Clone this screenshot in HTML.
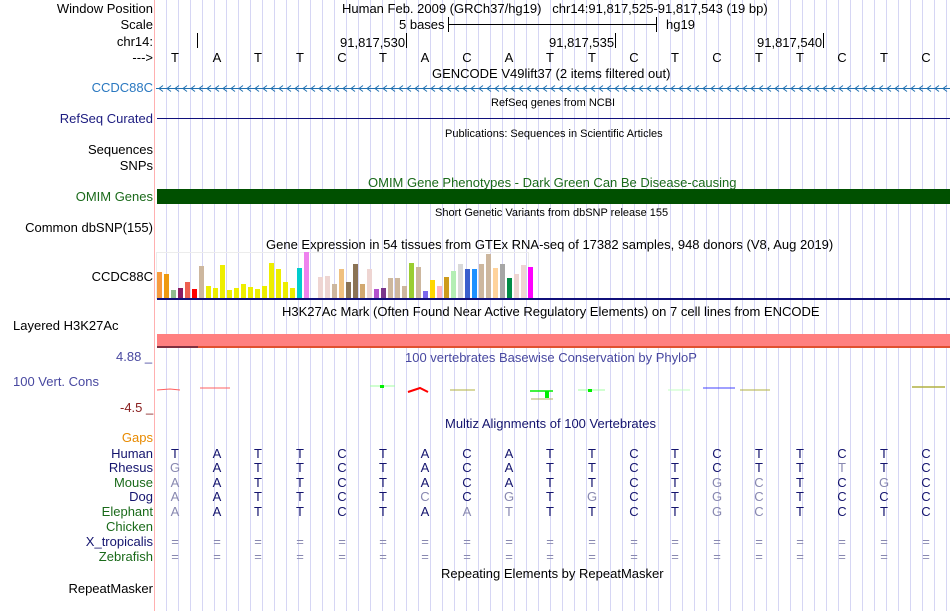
<!DOCTYPE html>
<html><head><meta charset="utf-8">
<style>
html,body{margin:0;padding:0;}
body{width:950px;height:611px;position:relative;overflow:hidden;background:#fff;font-family:"Liberation Sans",Arial,sans-serif;color:#000;}
#grid{position:absolute;left:155px;top:0;width:795px;height:611px;background-image:linear-gradient(to right,rgba(0,0,0,0) 0px,rgba(0,0,0,0) 11px,#d6d6f4 11px,#d6d6f4 12px);background-size:12px 611px;background-repeat:repeat-x;}
#pink{position:absolute;left:154px;top:0;width:1px;height:611px;background:#ffb0b0;}
.t{position:absolute;font-size:13px;line-height:15px;white-space:nowrap;}
.s{position:absolute;font-size:11px;line-height:13px;white-space:nowrap;}
.l{position:absolute;right:797px;font-size:13px;line-height:15px;white-space:nowrap;text-align:right;}
.b{position:absolute;font-size:13px;line-height:15px;width:20px;margin-left:-10px;text-align:center;}
.n{color:#14146e}.g{color:#8888b0}
.r{position:absolute;}
</style></head><body>
<div id="grid"></div>
<div id="pink"></div>

<div class="l" style="top:1px">Window Position</div>
<div class="l" style="top:17px">Scale</div>
<div class="l" style="top:34px">chr14:</div>
<div class="l" style="top:50px">---&gt;</div>
<div class="l" style="top:80px;color:#2a78c0">CCDC88C</div>
<div class="l" style="top:111px;color:#1c1c80">RefSeq Curated</div>
<div class="l" style="top:142px">Sequences</div>
<div class="l" style="top:158px">SNPs</div>
<div class="l" style="top:189px;color:#1a6a1a">OMIM Genes</div>
<div class="l" style="top:220px">Common dbSNP(155)</div>
<div class="l" style="top:269px">CCDC88C</div>
<div class="t" style="left:13px;top:318px">Layered H3K27Ac</div>
<div class="t" style="left:116px;top:349px;color:#4848a0">4.88 _</div>
<div class="t" style="left:13px;top:374px;color:#4848a0">100 Vert. Cons</div>
<div class="t" style="left:120px;top:400px;color:#8a2020">-4.5 _</div>
<div class="l" style="top:430px;color:#e88a00">Gaps</div>
<div class="l n" style="top:446px">Human</div>
<div class="l n" style="top:460px">Rhesus</div>
<div class="l" style="top:475px;color:#1a6a1a">Mouse</div>
<div class="l n" style="top:489px">Dog</div>
<div class="l" style="top:504px;color:#1a6a1a">Elephant</div>
<div class="l" style="top:519px;color:#1a6a1a">Chicken</div>
<div class="l n" style="top:534px">X_tropicalis</div>
<div class="l" style="top:549px;color:#1a6a1a">Zebrafish</div>
<div class="l" style="top:581px">RepeatMasker</div>

<div class="t" style="left:342px;top:1px">Human Feb. 2009 (GRCh37/hg19)&nbsp;&nbsp;&nbsp;chr14:91,817,525-91,817,543 (19 bp)</div>
<div class="t" style="left:399px;top:17px">5 bases</div>
<div class="r" style="left:448px;top:17px;width:1px;height:15px;background:#000"></div>
<div class="r" style="left:448px;top:24px;width:209px;height:1px;background:#000"></div>
<div class="r" style="left:656px;top:17px;width:1px;height:15px;background:#000"></div>
<div class="t" style="left:666px;top:17px">hg19</div>
<div class="r" style="left:197px;top:33px;width:1px;height:15px;background:#000"></div>
<div class="t" style="left:340px;top:35px">91,817,530</div>
<div class="r" style="left:406px;top:33px;width:1px;height:15px;background:#000"></div>
<div class="t" style="left:549px;top:35px">91,817,535</div>
<div class="r" style="left:615px;top:33px;width:1px;height:15px;background:#000"></div>
<div class="t" style="left:757px;top:35px">91,817,540</div>
<div class="r" style="left:823px;top:33px;width:1px;height:15px;background:#000"></div>

<div class="b" style="left:175px;top:50px">T</div><div class="b" style="left:217px;top:50px">A</div><div class="b" style="left:258px;top:50px">T</div><div class="b" style="left:300px;top:50px">T</div><div class="b" style="left:342px;top:50px">C</div><div class="b" style="left:383px;top:50px">T</div><div class="b" style="left:425px;top:50px">A</div><div class="b" style="left:467px;top:50px">C</div><div class="b" style="left:509px;top:50px">A</div><div class="b" style="left:550px;top:50px">T</div><div class="b" style="left:592px;top:50px">T</div><div class="b" style="left:634px;top:50px">C</div><div class="b" style="left:675px;top:50px">T</div><div class="b" style="left:717px;top:50px">C</div><div class="b" style="left:759px;top:50px">T</div><div class="b" style="left:800px;top:50px">T</div><div class="b" style="left:842px;top:50px">C</div><div class="b" style="left:884px;top:50px">T</div><div class="b" style="left:926px;top:50px">C</div>

<div class="t" style="left:432px;top:66px">GENCODE V49lift37 (2 items filtered out)</div>
<svg class="r" style="left:156px;top:83px" width="794" height="11">
<defs><pattern id="ar" x="0" y="0" width="8" height="11" patternUnits="userSpaceOnUse"><path d="M7,2.5 L3,5.5 L7,8.5" fill="none" stroke="#2070b0" stroke-width="1"/></pattern></defs>
<rect x="0" y="5" width="794" height="1" fill="#2070b0"/>
<rect x="0" y="0" width="794" height="11" fill="url(#ar)"/>
</svg>
<div class="s" style="left:491px;top:97px">RefSeq genes from NCBI</div>
<div class="r" style="left:157px;top:118px;width:793px;height:1px;background:#10107a"></div>
<div class="s" style="left:445px;top:128px">Publications: Sequences in Scientific Articles</div>

<div class="t" style="left:368px;top:175px;color:#1a6a1a">OMIM Gene Phenotypes - Dark Green Can Be Disease-causing</div>
<div class="r" style="left:157px;top:189px;width:793px;height:15px;background:#005000"></div>
<div class="s" style="left:435px;top:207px">Short Genetic Variants from dbSNP release 155</div>
<div class="t" style="left:266px;top:237px">Gene Expression in 54 tissues from GTEx RNA-seq of 17382 samples, 948 donors (V8, Aug 2019)</div>

<div class="r" style="left:156px;top:252px;width:371px;height:46px;border:1px solid #ececec;border-bottom:none"></div>
<svg class="r" style="left:0;top:0" width="950" height="611">
<g>
<rect x="157" y="272" width="5" height="26" fill="#f79a3e"/>
<rect x="164" y="274" width="5" height="24" fill="#ee9a10"/>
<rect x="171" y="290" width="5" height="8" fill="#8fbc8f"/>
<rect x="178" y="288" width="5" height="10" fill="#8b1c62"/>
<rect x="185" y="282" width="5" height="16" fill="#ee6050"/>
<rect x="192" y="289" width="5" height="9" fill="#ff0000"/>
<rect x="199" y="266" width="5" height="32" fill="#cdb79e"/>
<rect x="206" y="286" width="5" height="12" fill="#eeee00"/>
<rect x="213" y="288" width="5" height="10" fill="#eeee00"/>
<rect x="220" y="265" width="5" height="33" fill="#eeee00"/>
<rect x="227" y="290" width="5" height="8" fill="#eeee00"/>
<rect x="234" y="288" width="5" height="10" fill="#eeee00"/>
<rect x="241" y="284" width="5" height="14" fill="#eeee00"/>
<rect x="248" y="287" width="5" height="11" fill="#eeee00"/>
<rect x="255" y="289" width="5" height="9" fill="#eeee00"/>
<rect x="262" y="286" width="5" height="12" fill="#eeee00"/>
<rect x="269" y="263" width="5" height="35" fill="#eeee00"/>
<rect x="276" y="269" width="5" height="29" fill="#eeee00"/>
<rect x="283" y="282" width="5" height="16" fill="#eeee00"/>
<rect x="290" y="288" width="5" height="10" fill="#eeee00"/>
<rect x="297" y="268" width="5" height="30" fill="#00cdcd"/>
<rect x="304" y="252" width="5" height="46" fill="#ee82ee"/>
<rect x="318" y="277" width="5" height="21" fill="#eed5d2"/>
<rect x="325" y="276" width="5" height="22" fill="#eed5d2"/>
<rect x="332" y="284" width="5" height="14" fill="#cdb79e"/>
<rect x="339" y="269" width="5" height="29" fill="#f0c080"/>
<rect x="346" y="282" width="5" height="16" fill="#8b7355"/>
<rect x="353" y="264" width="5" height="34" fill="#8b7355"/>
<rect x="360" y="284" width="5" height="14" fill="#d2a870"/>
<rect x="367" y="269" width="5" height="29" fill="#eed5d2"/>
<rect x="374" y="289" width="5" height="9" fill="#b452cd"/>
<rect x="381" y="288" width="5" height="10" fill="#7a378b"/>
<rect x="388" y="278" width="5" height="20" fill="#cdb79e"/>
<rect x="395" y="278" width="5" height="20" fill="#cdb79e"/>
<rect x="402" y="286" width="5" height="12" fill="#cdb79e"/>
<rect x="409" y="263" width="5" height="35" fill="#9acd32"/>
<rect x="416" y="267" width="5" height="31" fill="#cdb79e"/>
<rect x="423" y="291" width="5" height="7" fill="#7b68ee"/>
<rect x="430" y="280" width="5" height="18" fill="#ffd700"/>
<rect x="437" y="286" width="5" height="12" fill="#ffb6c1"/>
<rect x="444" y="277" width="5" height="21" fill="#cd9b1d"/>
<rect x="451" y="271" width="5" height="27" fill="#b4eeb4"/>
<rect x="458" y="264" width="5" height="34" fill="#d9d9d9"/>
<rect x="465" y="269" width="5" height="29" fill="#3a5fcd"/>
<rect x="472" y="269" width="5" height="29" fill="#1e90ff"/>
<rect x="479" y="264" width="5" height="34" fill="#cdb79e"/>
<rect x="486" y="254" width="5" height="44" fill="#cdb79e"/>
<rect x="493" y="268" width="5" height="30" fill="#ffd39b"/>
<rect x="500" y="264" width="5" height="34" fill="#a6a6a6"/>
<rect x="507" y="278" width="5" height="20" fill="#008b45"/>
<rect x="514" y="274" width="5" height="24" fill="#eed5d2"/>
<rect x="521" y="265" width="5" height="33" fill="#eed5d2"/>
<rect x="528" y="267" width="5" height="31" fill="#ff00ff"/>
</g>
<rect x="157" y="298" width="793" height="2" fill="#10107a"/>
<rect x="157" y="334" width="793" height="12" fill="#ff8080"/>
<rect x="157" y="346" width="793" height="2" fill="#e05030"/>
<rect x="157" y="346" width="41" height="2" fill="#803040"/>
<g stroke-width="1" fill="none">
<path d="M157,390 L170,389 L180,390" stroke="#ff6060"/>
<path d="M200,388 L230,388" stroke="#ff6060"/>
<path d="M370,386 L395,386" stroke="#a0ffa0"/>
<rect x="380" y="385" width="4" height="3" fill="#00ee00" stroke="none"/>
<path d="M408,392 L420,388 L428,392" stroke="#ff0000" stroke-width="2"/>
<path d="M450,390 L475,390" stroke="#b0b040"/>
<path d="M530,391 L553,391" stroke="#00ee00" stroke-width="1.5"/>
<rect x="545" y="391" width="4" height="7" fill="#00ee00" stroke="none"/>
<path d="M531,399 L553,399" stroke="#b0b060"/>
<path d="M578,390 L605,390" stroke="#a0ffa0"/>
<rect x="588" y="389" width="4" height="3" fill="#00ee00" stroke="none"/>
<path d="M668,390 L690,390" stroke="#c0ffc0"/>
<path d="M703,388 L735,388" stroke="#4040ff"/>
<path d="M740,390 L770,390" stroke="#b0b040"/>
<path d="M912,387 L945,387" stroke="#b0b040" stroke-width="1.5"/>
</g>
</svg>

<div class="t" style="left:282px;top:304px">H3K27Ac Mark (Often Found Near Active Regulatory Elements) on 7 cell lines from ENCODE</div>
<div class="t" style="left:405px;top:350px;color:#4848a0">100 vertebrates Basewise Conservation by PhyloP</div>
<div class="t" style="left:445px;top:416px;color:#14146e">Multiz Alignments of 100 Vertebrates</div>

<div style="position:absolute;left:0;top:446px" class="n">
<div class="b" style="left:175px">T</div><div class="b" style="left:217px">A</div><div class="b" style="left:258px">T</div><div class="b" style="left:300px">T</div><div class="b" style="left:342px">C</div><div class="b" style="left:383px">T</div><div class="b" style="left:425px">A</div><div class="b" style="left:467px">C</div><div class="b" style="left:509px">A</div><div class="b" style="left:550px">T</div><div class="b" style="left:592px">T</div><div class="b" style="left:634px">C</div><div class="b" style="left:675px">T</div><div class="b" style="left:717px">C</div><div class="b" style="left:759px">T</div><div class="b" style="left:800px">T</div><div class="b" style="left:842px">C</div><div class="b" style="left:884px">T</div><div class="b" style="left:926px">C</div>
</div>
<div style="position:absolute;left:0;top:460px" class="n">
<div class="b g" style="left:175px">G</div><div class="b" style="left:217px">A</div><div class="b" style="left:258px">T</div><div class="b" style="left:300px">T</div><div class="b" style="left:342px">C</div><div class="b" style="left:383px">T</div><div class="b" style="left:425px">A</div><div class="b" style="left:467px">C</div><div class="b" style="left:509px">A</div><div class="b" style="left:550px">T</div><div class="b" style="left:592px">T</div><div class="b" style="left:634px">C</div><div class="b" style="left:675px">T</div><div class="b" style="left:717px">C</div><div class="b" style="left:759px">T</div><div class="b" style="left:800px">T</div><div class="b g" style="left:842px">T</div><div class="b" style="left:884px">T</div><div class="b" style="left:926px">C</div>
</div>
<div style="position:absolute;left:0;top:475px" class="n">
<div class="b g" style="left:175px">A</div><div class="b" style="left:217px">A</div><div class="b" style="left:258px">T</div><div class="b" style="left:300px">T</div><div class="b" style="left:342px">C</div><div class="b" style="left:383px">T</div><div class="b" style="left:425px">A</div><div class="b" style="left:467px">C</div><div class="b" style="left:509px">A</div><div class="b" style="left:550px">T</div><div class="b" style="left:592px">T</div><div class="b" style="left:634px">C</div><div class="b" style="left:675px">T</div><div class="b g" style="left:717px">G</div><div class="b g" style="left:759px">C</div><div class="b" style="left:800px">T</div><div class="b" style="left:842px">C</div><div class="b g" style="left:884px">G</div><div class="b" style="left:926px">C</div>
</div>
<div style="position:absolute;left:0;top:489px" class="n">
<div class="b g" style="left:175px">A</div><div class="b" style="left:217px">A</div><div class="b" style="left:258px">T</div><div class="b" style="left:300px">T</div><div class="b" style="left:342px">C</div><div class="b" style="left:383px">T</div><div class="b g" style="left:425px">C</div><div class="b" style="left:467px">C</div><div class="b g" style="left:509px">G</div><div class="b" style="left:550px">T</div><div class="b g" style="left:592px">G</div><div class="b" style="left:634px">C</div><div class="b" style="left:675px">T</div><div class="b g" style="left:717px">G</div><div class="b g" style="left:759px">C</div><div class="b" style="left:800px">T</div><div class="b" style="left:842px">C</div><div class="b" style="left:884px">C</div><div class="b" style="left:926px">C</div>
</div>
<div style="position:absolute;left:0;top:504px" class="n">
<div class="b g" style="left:175px">A</div><div class="b" style="left:217px">A</div><div class="b" style="left:258px">T</div><div class="b" style="left:300px">T</div><div class="b" style="left:342px">C</div><div class="b" style="left:383px">T</div><div class="b" style="left:425px">A</div><div class="b g" style="left:467px">A</div><div class="b g" style="left:509px">T</div><div class="b" style="left:550px">T</div><div class="b" style="left:592px">T</div><div class="b" style="left:634px">C</div><div class="b" style="left:675px">T</div><div class="b g" style="left:717px">G</div><div class="b g" style="left:759px">C</div><div class="b" style="left:800px">T</div><div class="b" style="left:842px">C</div><div class="b" style="left:884px">T</div><div class="b" style="left:926px">C</div>
</div>
<div style="position:absolute;left:0;top:534px" class="g">
<div class="b" style="left:175px">=</div><div class="b" style="left:217px">=</div><div class="b" style="left:258px">=</div><div class="b" style="left:300px">=</div><div class="b" style="left:342px">=</div><div class="b" style="left:383px">=</div><div class="b" style="left:425px">=</div><div class="b" style="left:467px">=</div><div class="b" style="left:509px">=</div><div class="b" style="left:550px">=</div><div class="b" style="left:592px">=</div><div class="b" style="left:634px">=</div><div class="b" style="left:675px">=</div><div class="b" style="left:717px">=</div><div class="b" style="left:759px">=</div><div class="b" style="left:800px">=</div><div class="b" style="left:842px">=</div><div class="b" style="left:884px">=</div><div class="b" style="left:926px">=</div>
</div>
<div style="position:absolute;left:0;top:549px" class="g">
<div class="b" style="left:175px">=</div><div class="b" style="left:217px">=</div><div class="b" style="left:258px">=</div><div class="b" style="left:300px">=</div><div class="b" style="left:342px">=</div><div class="b" style="left:383px">=</div><div class="b" style="left:425px">=</div><div class="b" style="left:467px">=</div><div class="b" style="left:509px">=</div><div class="b" style="left:550px">=</div><div class="b" style="left:592px">=</div><div class="b" style="left:634px">=</div><div class="b" style="left:675px">=</div><div class="b" style="left:717px">=</div><div class="b" style="left:759px">=</div><div class="b" style="left:800px">=</div><div class="b" style="left:842px">=</div><div class="b" style="left:884px">=</div><div class="b" style="left:926px">=</div>
</div>

<div class="t" style="left:441px;top:566px">Repeating Elements by RepeatMasker</div>
</body></html>
